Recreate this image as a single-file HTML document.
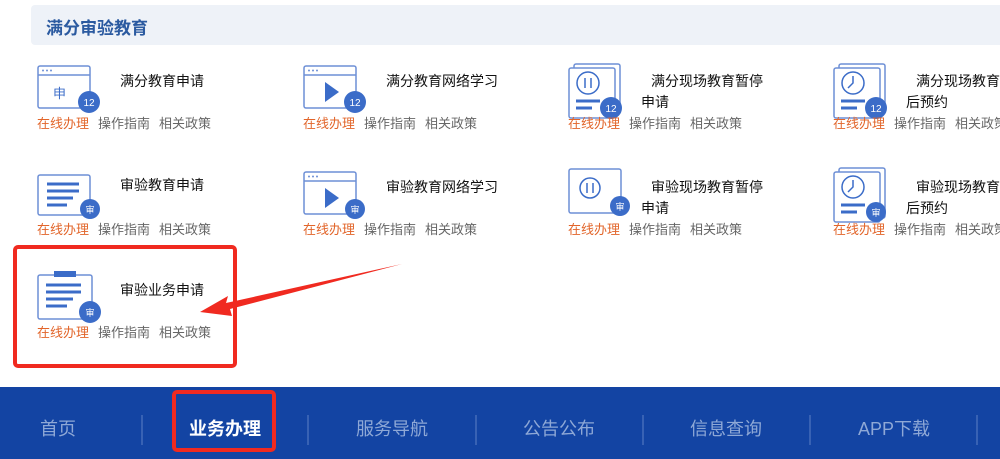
<!DOCTYPE html>
<html><head><meta charset="utf-8"><style>
*{margin:0;padding:0;box-sizing:border-box}
body{width:1000px;height:459px;overflow:hidden;background:#fff;font-family:"Liberation Sans","Noto Sans CJK SC",sans-serif;position:relative}
.hd{position:absolute;left:31px;top:5px;width:980px;height:40px;background:#eef2f8;border-radius:4px}
.hd span{position:absolute;left:15px;top:9px;font-size:17px;font-weight:bold;color:#2b5aa0}
.it{position:absolute;width:260px;height:80px}
.it svg{position:absolute;left:0;top:0}
.t{position:absolute;left:83px;top:6px;font-size:14px;color:#111;line-height:21px;width:150px}
.t2{left:73px;text-indent:10px;width:126px}
.l{position:absolute;left:0;top:48px;font-size:13px;color:#666;white-space:nowrap;word-spacing:0}
.l b{font-weight:normal;color:#e2652a;margin-right:9px}
.l i{font-style:normal;margin-right:9px}
.rb{position:absolute;border:4px solid #f02a20;border-radius:5px}
.nav{position:absolute;left:0;top:387px;width:1000px;height:72px;background:#1344a3}
.nav div{position:absolute;top:28px;font-size:18px;color:#8ea8d6;transform:translateX(-50%);white-space:nowrap}
.nav .a{color:#fff;font-weight:bold}
.sp{position:absolute;top:25px;width:1px;height:30px;background:#5c7fc4}
</style></head><body>
<div class="hd"><span>满分审验教育</span></div>

<svg width="0" height="0" style="position:absolute">
<defs>
<g id="win"><rect x="1" y="1" width="52" height="42" fill="#fff" stroke="#6d8fd6" stroke-width="1.5" rx="2"/><line x1="1" y1="10" x2="53" y2="10" stroke="#6d8fd6" stroke-width="1.5"/><circle cx="6" cy="5.5" r="1" fill="#6d8fd6"/><circle cx="10" cy="5.5" r="1" fill="#6d8fd6"/><circle cx="14" cy="5.5" r="1" fill="#6d8fd6"/></g>
<g id="doc"><rect x="1" y="6" width="52" height="40" fill="#fff" stroke="#6d8fd6" stroke-width="1.5" rx="2"/><line x1="10" y1="15" x2="42" y2="15" stroke="#3b6cc8" stroke-width="3"/><line x1="10" y1="22" x2="42" y2="22" stroke="#3b6cc8" stroke-width="3"/><line x1="10" y1="29" x2="36" y2="29" stroke="#3b6cc8" stroke-width="3"/><line x1="10" y1="36" x2="30" y2="36" stroke="#3b6cc8" stroke-width="3"/></g>
<g id="stack"><rect x="6" y="1" width="46" height="50" fill="#fff" stroke="#6d8fd6" stroke-width="1.5" rx="2"/><rect x="1" y="5" width="46" height="50" fill="#fff" stroke="#6d8fd6" stroke-width="1.5" rx="2"/><line x1="8" y1="38" x2="32" y2="38" stroke="#3b6cc8" stroke-width="3"/><line x1="8" y1="45" x2="24" y2="45" stroke="#3b6cc8" stroke-width="3"/><circle cx="20" cy="20" r="11" fill="none" stroke="#3b6cc8" stroke-width="1.5"/></g>
</defs></svg>

<!-- row 1 -->
<div class="it" style="left:37px;top:65px"><svg width="70" height="50"><use href="#win"/><text x="16" y="33" font-size="13" fill="#3b6cc8" font-family="Noto Sans CJK SC">申</text><circle cx="52" cy="37" r="11" fill="#3b6cc8"/><text x="52" y="41" font-size="10" fill="#fff" text-anchor="middle" font-family="Liberation Sans">12</text></svg><div class="t">满分教育申请</div><div class="l"><b>在线办理</b><i>操作指南</i>相关政策</div></div>
<div class="it" style="left:303px;top:65px"><svg width="70" height="50"><use href="#win"/><path d="M22 17 L36 27 L22 37Z" fill="#3b6cc8"/><circle cx="52" cy="37" r="11" fill="#3b6cc8"/><text x="52" y="41" font-size="10" fill="#fff" text-anchor="middle" font-family="Liberation Sans">12</text></svg><div class="t">满分教育网络学习</div><div class="l"><b>在线办理</b><i>操作指南</i>相关政策</div></div>
<div class="it" style="left:568px;top:63px"><svg width="80" height="58"><use href="#stack"/><line x1="17" y1="15" x2="17" y2="25" stroke="#3b6cc8" stroke-width="1.5"/><line x1="23" y1="15" x2="23" y2="25" stroke="#3b6cc8" stroke-width="1.5"/><circle cx="43" cy="45" r="11" fill="#3b6cc8"/><text x="43" y="49" font-size="10" fill="#fff" text-anchor="middle" font-family="Liberation Sans">12</text></svg><div class="t t2" style="top:8px">满分现场教育暂停申请</div><div class="l" style="top:50px"><b>在线办理</b><i>操作指南</i>相关政策</div></div>
<div class="it" style="left:833px;top:63px"><svg width="80" height="58"><use href="#stack"/><path d="M20 13 V20 L15 25" fill="none" stroke="#3b6cc8" stroke-width="1.5"/><circle cx="43" cy="45" r="11" fill="#3b6cc8"/><text x="43" y="49" font-size="10" fill="#fff" text-anchor="middle" font-family="Liberation Sans">12</text></svg><div class="t t2" style="top:8px">满分现场教育考试后预约</div><div class="l" style="top:50px"><b>在线办理</b><i>操作指南</i>相关政策</div></div>

<!-- row 2 -->
<div class="it" style="left:37px;top:169px"><svg width="70" height="54"><use href="#doc"/><circle cx="53" cy="40" r="10" fill="#3b6cc8"/><text x="53" y="44" font-size="9" fill="#fff" text-anchor="middle" font-family="Noto Sans CJK SC">审</text></svg><div class="t">审验教育申请</div><div class="l" style="top:50px"><b>在线办理</b><i>操作指南</i>相关政策</div></div>
<div class="it" style="left:303px;top:171px"><svg width="70" height="54"><use href="#win"/><path d="M22 17 L36 27 L22 37Z" fill="#3b6cc8"/><circle cx="52" cy="38" r="10" fill="#3b6cc8"/><text x="52" y="42" font-size="9" fill="#fff" text-anchor="middle" font-family="Noto Sans CJK SC">审</text></svg><div class="t">审验教育网络学习</div><div class="l" style="top:48px"><b>在线办理</b><i>操作指南</i>相关政策</div></div>
<div class="it" style="left:568px;top:168px"><svg width="80" height="54"><rect x="1" y="1" width="52" height="44" fill="#fff" stroke="#6d8fd6" stroke-width="1.5" rx="2"/><circle cx="22" cy="20" r="10" fill="none" stroke="#3b6cc8" stroke-width="1.5"/><line x1="19" y1="15" x2="19" y2="25" stroke="#3b6cc8" stroke-width="1.5"/><line x1="25" y1="15" x2="25" y2="25" stroke="#3b6cc8" stroke-width="1.5"/><circle cx="52" cy="38" r="10" fill="#3b6cc8"/><text x="52" y="42" font-size="9" fill="#fff" text-anchor="middle" font-family="Noto Sans CJK SC">审</text></svg><div class="t t2" style="top:9px">审验现场教育暂停申请</div><div class="l" style="top:51px"><b>在线办理</b><i>操作指南</i>相关政策</div></div>
<div class="it" style="left:833px;top:167px"><svg width="80" height="58"><use href="#stack"/><path d="M20 13 V20 L15 25" fill="none" stroke="#3b6cc8" stroke-width="1.5"/><circle cx="43" cy="45" r="10" fill="#3b6cc8"/><text x="43" y="49" font-size="9" fill="#fff" text-anchor="middle" font-family="Noto Sans CJK SC">审</text></svg><div class="t t2" style="top:10px">审验现场教育考试后预约</div><div class="l" style="top:52px"><b>在线办理</b><i>操作指南</i>相关政策</div></div>

<!-- row 3 -->
<div class="it" style="left:37px;top:270px"><svg width="70" height="54"><rect x="1" y="5" width="54" height="44" fill="#fff" stroke="#6d8fd6" stroke-width="1.5" rx="2"/><rect x="17" y="1" width="22" height="6" fill="#3b6cc8"/><line x1="9" y1="15" x2="44" y2="15" stroke="#3b6cc8" stroke-width="3"/><line x1="9" y1="22" x2="44" y2="22" stroke="#3b6cc8" stroke-width="3"/><line x1="9" y1="29" x2="36" y2="29" stroke="#3b6cc8" stroke-width="3"/><line x1="9" y1="36" x2="30" y2="36" stroke="#3b6cc8" stroke-width="3"/><circle cx="53" cy="42" r="11" fill="#3b6cc8"/><text x="53" y="46" font-size="9" fill="#fff" text-anchor="middle" font-family="Noto Sans CJK SC">审</text></svg><div class="t" style="top:10px">审验业务申请</div><div class="l" style="top:52px"><b>在线办理</b><i>操作指南</i>相关政策</div></div>

<div class="rb" style="left:13px;top:245px;width:224px;height:123px"></div>
<svg style="position:absolute;left:0;top:0" width="1000" height="459"><path d="M402 264 L226 303 L228 296 L200 312 L232 316 L230 309 Z" fill="#f02a20"/></svg>

<div class="nav">
<div style="left:58px">首页</div>
<div class="sp" style="left:142px"></div>
<div class="a" style="left:225px">业务办理</div>
<div class="sp" style="left:308px"></div>
<div style="left:392px">服务导航</div>
<div class="sp" style="left:476px"></div>
<div style="left:559px">公告公布</div>
<div class="sp" style="left:643px"></div>
<div style="left:726px">信息查询</div>
<div class="sp" style="left:810px"></div>
<div style="left:894px">APP下载</div>
<div class="sp" style="left:977px"></div>
</div>
<div class="rb" style="left:172px;top:390px;width:104px;height:62px"></div>
</body></html>
